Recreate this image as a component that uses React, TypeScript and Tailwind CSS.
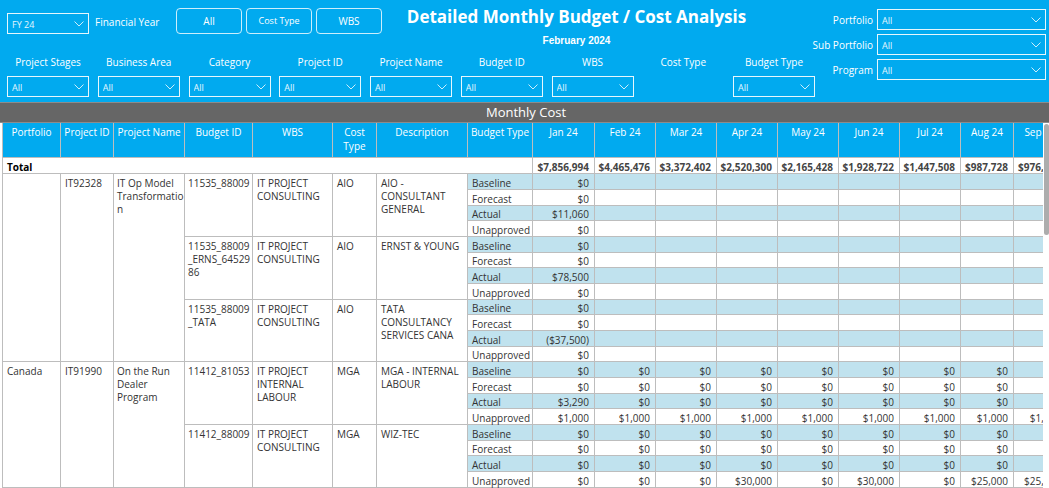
import { useState } from "react";

interface SlicerProps {
  label: string;
  value?: string;
  className?: string;
}

const Chevron = () => (
  <svg
    viewBox="0 0 10 6"
    className="pointer-events-none absolute right-[5px] top-2 h-[6px] w-[10px] opacity-80"
    fill="none"
    stroke="white"
    aria-hidden="true"
  >
    <path d="M0.5 0.5 L5 5 L9.5 0.5" />
  </svg>
);

const SlicerSelect = ({ label, value = "All", className = "" }: SlicerProps) => (
  <div className={`relative h-[21px] ${className}`}>
    <select
      aria-label={label}
      className="block h-full w-full appearance-none border border-white/90 bg-transparent pl-1 pr-4 pt-px text-[9px] leading-[17px] text-white/90 outline-none"
    >
      <option>{value}</option>
    </select>
    <Chevron />
  </div>
);

const slicers = [
  { label: "Project Stages", select: true },
  { label: "Business Area", select: true },
  { label: "Category", select: true },
  { label: "Project ID", select: true },
  { label: "Project Name", select: true },
  { label: "Budget ID", select: true },
  { label: "WBS", select: true },
  { label: "Cost Type", select: false },
  { label: "Budget Type", select: true },
];

const views = [
  { name: "All", size: "text-[10px]" },
  { name: "Cost Type", size: "text-[9px]" },
  { name: "WBS", size: "text-[10px]" },
];

const columns = [
  { name: "Portfolio", width: "w-[58px]" },
  { name: "Project ID", width: "w-[53px]" },
  { name: "Project Name", width: "w-[71px]" },
  { name: "Budget ID", width: "w-[68px]" },
  { name: "WBS", width: "w-[80px]" },
  { name: "Cost Type", width: "w-[44px]" },
  { name: "Description", width: "w-[91px]" },
  { name: "Budget Type", width: "w-[65px]" },
  { name: "Jan 24", width: "w-[62px]" },
  { name: "Feb 24", width: "w-[61px]" },
  { name: "Mar 24", width: "w-[61px]" },
  { name: "Apr 24", width: "w-[61px]" },
  { name: "May 24", width: "w-[61px]" },
  { name: "Jun 24", width: "w-[61px]" },
  { name: "Jul 24", width: "w-[61px]" },
  { name: "Aug 24", width: "w-[53px]" },
  { name: "Sep 24", width: "w-[53px]" },
];

const totals = [
  "$7,856,994",
  "$4,465,476",
  "$3,372,402",
  "$2,520,300",
  "$2,165,428",
  "$1,928,722",
  "$1,447,508",
  "$987,728",
  "$976,728",
];

const budgetTypes = ["Baseline", "Forecast", "Actual", "Unapproved"];

const only = (jan: string) => [jan, "", "", "", "", "", "", "", ""];
const zeros = ["$0", "$0", "$0", "$0", "$0", "$0", "$0", "$0", ""];

const projects = [
  {
    portfolio: "",
    id: "IT92328",
    name: "IT Op Model Transformation",
    budgets: [
      {
        id: "11535_88009",
        wbs: "IT PROJECT CONSULTING",
        costType: "AIO",
        description: "AIO - CONSULTANT GENERAL",
        values: [only("$0"), only("$0"), only("$11,060"), only("$0")],
      },
      {
        id: "11535_88009_ERNS_6452986",
        wbs: "IT PROJECT CONSULTING",
        costType: "AIO",
        description: "ERNST & YOUNG",
        values: [only("$0"), only("$0"), only("$78,500"), only("$0")],
      },
      {
        id: "11535_88009_TATA",
        wbs: "IT PROJECT CONSULTING",
        costType: "AIO",
        description: "TATA CONSULTANCY SERVICES CANA",
        values: [only("$0"), only("$0"), only("($37,500)"), only("$0")],
      },
    ],
  },
  {
    portfolio: "Canada",
    id: "IT91990",
    name: "On the Run Dealer Program",
    budgets: [
      {
        id: "11412_81053",
        wbs: "IT PROJECT INTERNAL LABOUR",
        costType: "MGA",
        description: "MGA - INTERNAL LABOUR",
        values: [
          zeros,
          zeros,
          ["$3,290", ...zeros.slice(1)],
          Array(9).fill("$1,000"),
        ],
      },
      {
        id: "11412_88009",
        wbs: "IT PROJECT CONSULTING",
        costType: "MGA",
        description: "WIZ-TEC",
        values: [
          zeros,
          zeros,
          zeros,
          ["$0", "$0", "$0", "$30,000", "$0", "$30,000", "$0", "$25,000", "$25,000"],
        ],
      },
    ],
  },
];

const cell = "border-b border-r border-[#bdbdbd]";
const textCell = `${cell} pl-1 pt-[3px] align-top break-words`;
const tightCell = `${cell} pl-[3px] pt-[3px] align-top break-words`;
const labelCell = `${cell} pl-1 pt-[2px] text-left leading-3`;
const valueCell = `${cell} pr-[5px] pt-[2px] text-right leading-3`;

const ReportHeader = () => {
  const [view, setView] = useState("All");

  return (
    <header className="flex justify-between gap-[2px] bg-[#01aaef] pb-[5px] pl-[7px] pr-[3px] pt-2 text-white">
      <div className="max-w-[808px] flex-1">
        {/* Year, view buttons and title */}
        <div className="flex h-[46px] items-start">
          <div className="flex items-start gap-[6px] pt-[5px]">
            <SlicerSelect label="Financial Year" value="FY 24" className="w-[82px]" />
            <span className="w-[75px] leading-[19px]">Financial Year</span>
          </div>
          <div className="ml-[6px] flex gap-[4px]">
            {views.map((item) => (
              <button
                key={item.name}
                type="button"
                aria-pressed={view === item.name}
                onClick={() => setView(item.name)}
                className={`h-[26px] w-[66px] rounded-[4px] border border-white/80 ${item.size}`}
              >
                {item.name}
              </button>
            ))}
          </div>
          <div className="flex-1 whitespace-nowrap pr-11 text-center">
            <h1 className="text-[17px] font-bold leading-[18px]">
              Detailed Monthly Budget / Cost Analysis
            </h1>
            <p className="mt-[9px] font-['Liberation_Sans',sans-serif] text-[10px] font-bold leading-3">
              February 2024
            </p>
          </div>
        </div>

        {/* Slicers */}
        <div className="flex justify-between">
          {slicers.map((slicer) => (
            <div key={slicer.label} className="w-[82px]">
              <div className="mb-[6px] text-center leading-4">{slicer.label}</div>
              {slicer.select && <SlicerSelect label={slicer.label} />}
            </div>
          ))}
        </div>
      </div>

      <div className="flex w-[229px] flex-col gap-1 pt-px">
        {["Portfolio", "Sub Portfolio", "Program"].map((label) => (
          <div key={label} className="flex items-center gap-1">
            <span className="flex w-14 justify-end whitespace-nowrap pt-px">{label}</span>
            <SlicerSelect label={label} className="flex-1" />
          </div>
        ))}
      </div>
    </header>
  );
};

const CostTable = () => {
  let rowNumber = 0;

  return (
    <table className="w-[1065px] table-fixed border-separate border-spacing-0 border-l border-[#bdbdbd] leading-[13px] text-[#333]">
      <thead>
        <tr className="h-[35px] bg-[#01aaef] text-white">
          {columns.map((column) => (
            <th
              key={column.name}
              scope="col"
              className={`${column.width} ${cell} pt-[2px] align-top font-normal leading-[14px]`}
            >
              {column.name}
            </th>
          ))}
        </tr>
      </thead>
      <tbody>
        <tr className="h-4 font-bold">
          <th scope="row" colSpan={8} className={`${labelCell} text-black`}>
            Total
          </th>
          {totals.map((total, index) => (
            <td key={index} className={`${valueCell} text-[#444]`}>
              {total}
            </td>
          ))}
        </tr>
        {projects.map((project) =>
          project.budgets.map((budget, budgetIndex) =>
            budget.values.map((values, typeIndex) => {
              const banded = typeIndex % 2 === 0 ? "bg-[#c0e2ee]" : "";
              const height = ++rowNumber % 3 === 0 ? "h-[15px]" : "h-4";
              const span = project.budgets.length * 4;

              return (
                <tr key={`${budget.id}-${typeIndex}`} className={height}>
                  {budgetIndex === 0 && typeIndex === 0 && (
                    <>
                      <td rowSpan={span} className={textCell}>{project.portfolio}</td>
                      <td rowSpan={span} className={textCell}>{project.id}</td>
                      <td rowSpan={span} className={tightCell}>{project.name}</td>
                    </>
                  )}
                  {typeIndex === 0 && (
                    <>
                      <td rowSpan={4} className={tightCell}>{budget.id}</td>
                      <td rowSpan={4} className={textCell}>{budget.wbs}</td>
                      <td rowSpan={4} className={textCell}>{budget.costType}</td>
                      <td rowSpan={4} className={textCell}>{budget.description}</td>
                    </>
                  )}
                  <td className={`${labelCell} ${banded}`}>{budgetTypes[typeIndex]}</td>
                  {values.map((value, index) => (
                    <td key={index} className={`${valueCell} ${banded}`}>
                      {value}
                    </td>
                  ))}
                </tr>
              );
            })
          )
        )}
      </tbody>
    </table>
  );
};

const App = () => {
  return (
    <main className="bg-white font-['Open_Sans','Noto_Sans',sans-serif] text-[10px]">
      <ReportHeader />
      <section>
        <h2 className="border-y border-[#8c8c8c] bg-[#666] pl-[3px] text-center text-[13px] leading-[19px] text-white">
          Monthly Cost
        </h2>
        <div className="flex">
          <div className="ml-[2px] flex-1 overflow-hidden">
            <CostTable />
          </div>
          {/* Scroll thumb */}
          <div className="w-[6px] pl-px pt-px">
            <div className="h-[111px] rounded-full bg-[#adadad]" />
          </div>
        </div>
      </section>
    </main>
  );
};

export default App;
